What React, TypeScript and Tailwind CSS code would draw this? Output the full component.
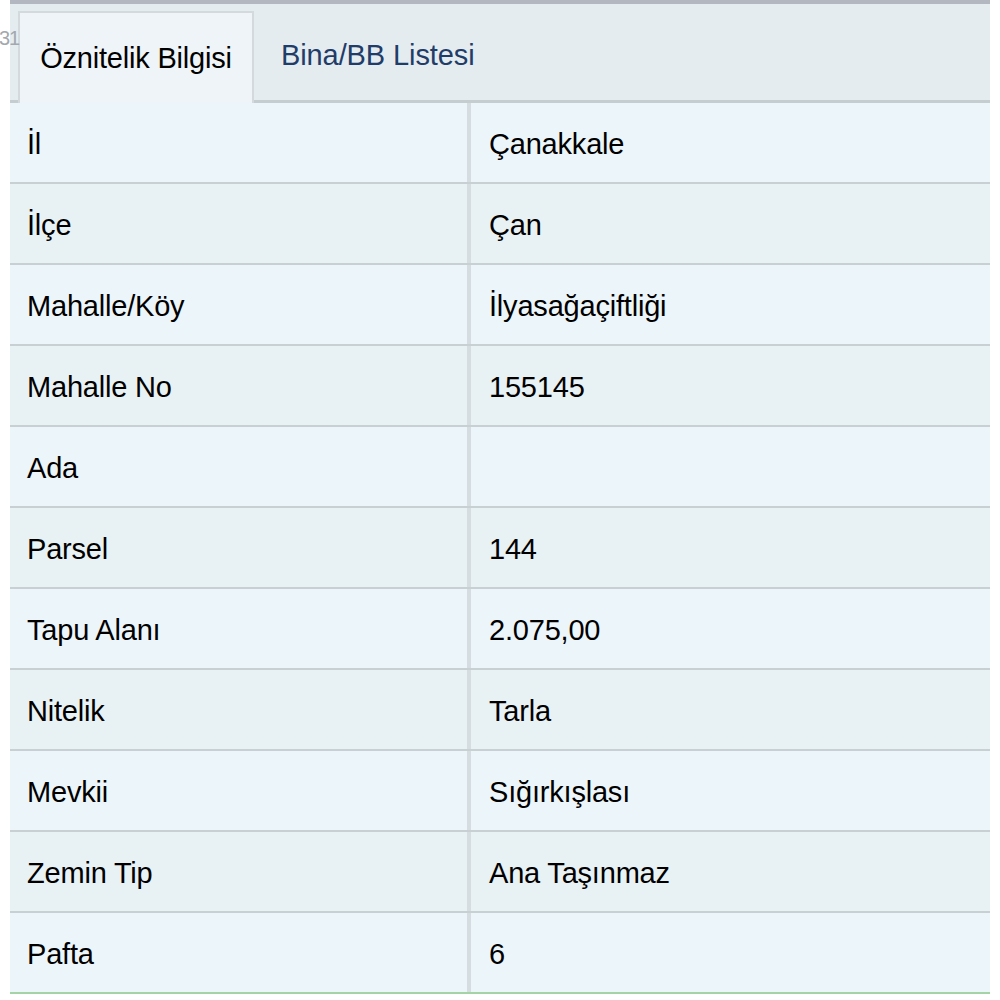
const rows = [
  { label: "İl", value: "Çanakkale" },
  { label: "İlçe", value: "Çan" },
  { label: "Mahalle/Köy", value: "İlyasağaçiftliği" },
  { label: "Mahalle No", value: "155145" },
  { label: "Ada", value: "" },
  { label: "Parsel", value: "144" },
  { label: "Tapu Alanı", value: "2.075,00" },
  { label: "Nitelik", value: "Tarla" },
  { label: "Mevkii", value: "Sığırkışlası" },
  { label: "Zemin Tip", value: "Ana Taşınmaz" },
  { label: "Pafta", value: "6" },
]

const App = () => {
  return (
    <div className="relative w-[1000px] h-[1000px] overflow-hidden bg-white font-['Liberation_Sans',Arial,sans-serif] text-black">
      {/* page number peeking from behind the panel */}
      <span className="absolute left-[-1px] top-[28px] z-10 text-[20px] leading-none tracking-[-1px] text-[#a3a8ad]">31</span>

      <div className="ml-[10px] w-[980px]">
        {/* Tabs */}
        <div className="h-[103px] bg-[#e5ecef] border-t-[4px] border-[#b3b7c0] border-b-[3px] border-b-[#c6cdd1] flex items-end pl-[8px]">
          <div className="h-[92px] w-[236px] bg-[#eef4f7] border-l-2 border-t-2 border-r-2 border-[#d3d9dc] flex items-center justify-center -mb-[3px] pt-[2px] text-[29px] tracking-[-0.2px]">
            Öznitelik Bilgisi
          </div>
          <div className="h-[92px] flex items-center pl-[27px] pt-[4px] text-[29px] tracking-[-0.1px] text-[#1f3d68]">
            Bina/BB Listesi
          </div>
        </div>

        {/* Attribute table */}
        <div className="flex flex-col">
          {rows.map((row, i) => (
            <div
              key={row.label}
              className={
                "grid grid-cols-[461px_1fr] h-[81px] border-b-2 " +
                (i === rows.length - 1 ? "border-[#a4d4a5] " : "border-[#c9d0d4] ") +
                (i % 2 === 0 ? "bg-[#ecf5fa]" : "bg-[#e8f1f4]")
              }
            >
              <div className="flex items-center pl-[17px] pt-[4px] border-r-[4px] border-[#d6dde0] text-[29px] tracking-[-0.2px]">
                {row.label}
              </div>
              <div className="flex items-center pl-[18px] pt-[4px] text-[29px] tracking-[-0.2px]">
                {row.value}
              </div>
            </div>
          ))}
        </div>
      </div>
    </div>
  )
}

export default App
